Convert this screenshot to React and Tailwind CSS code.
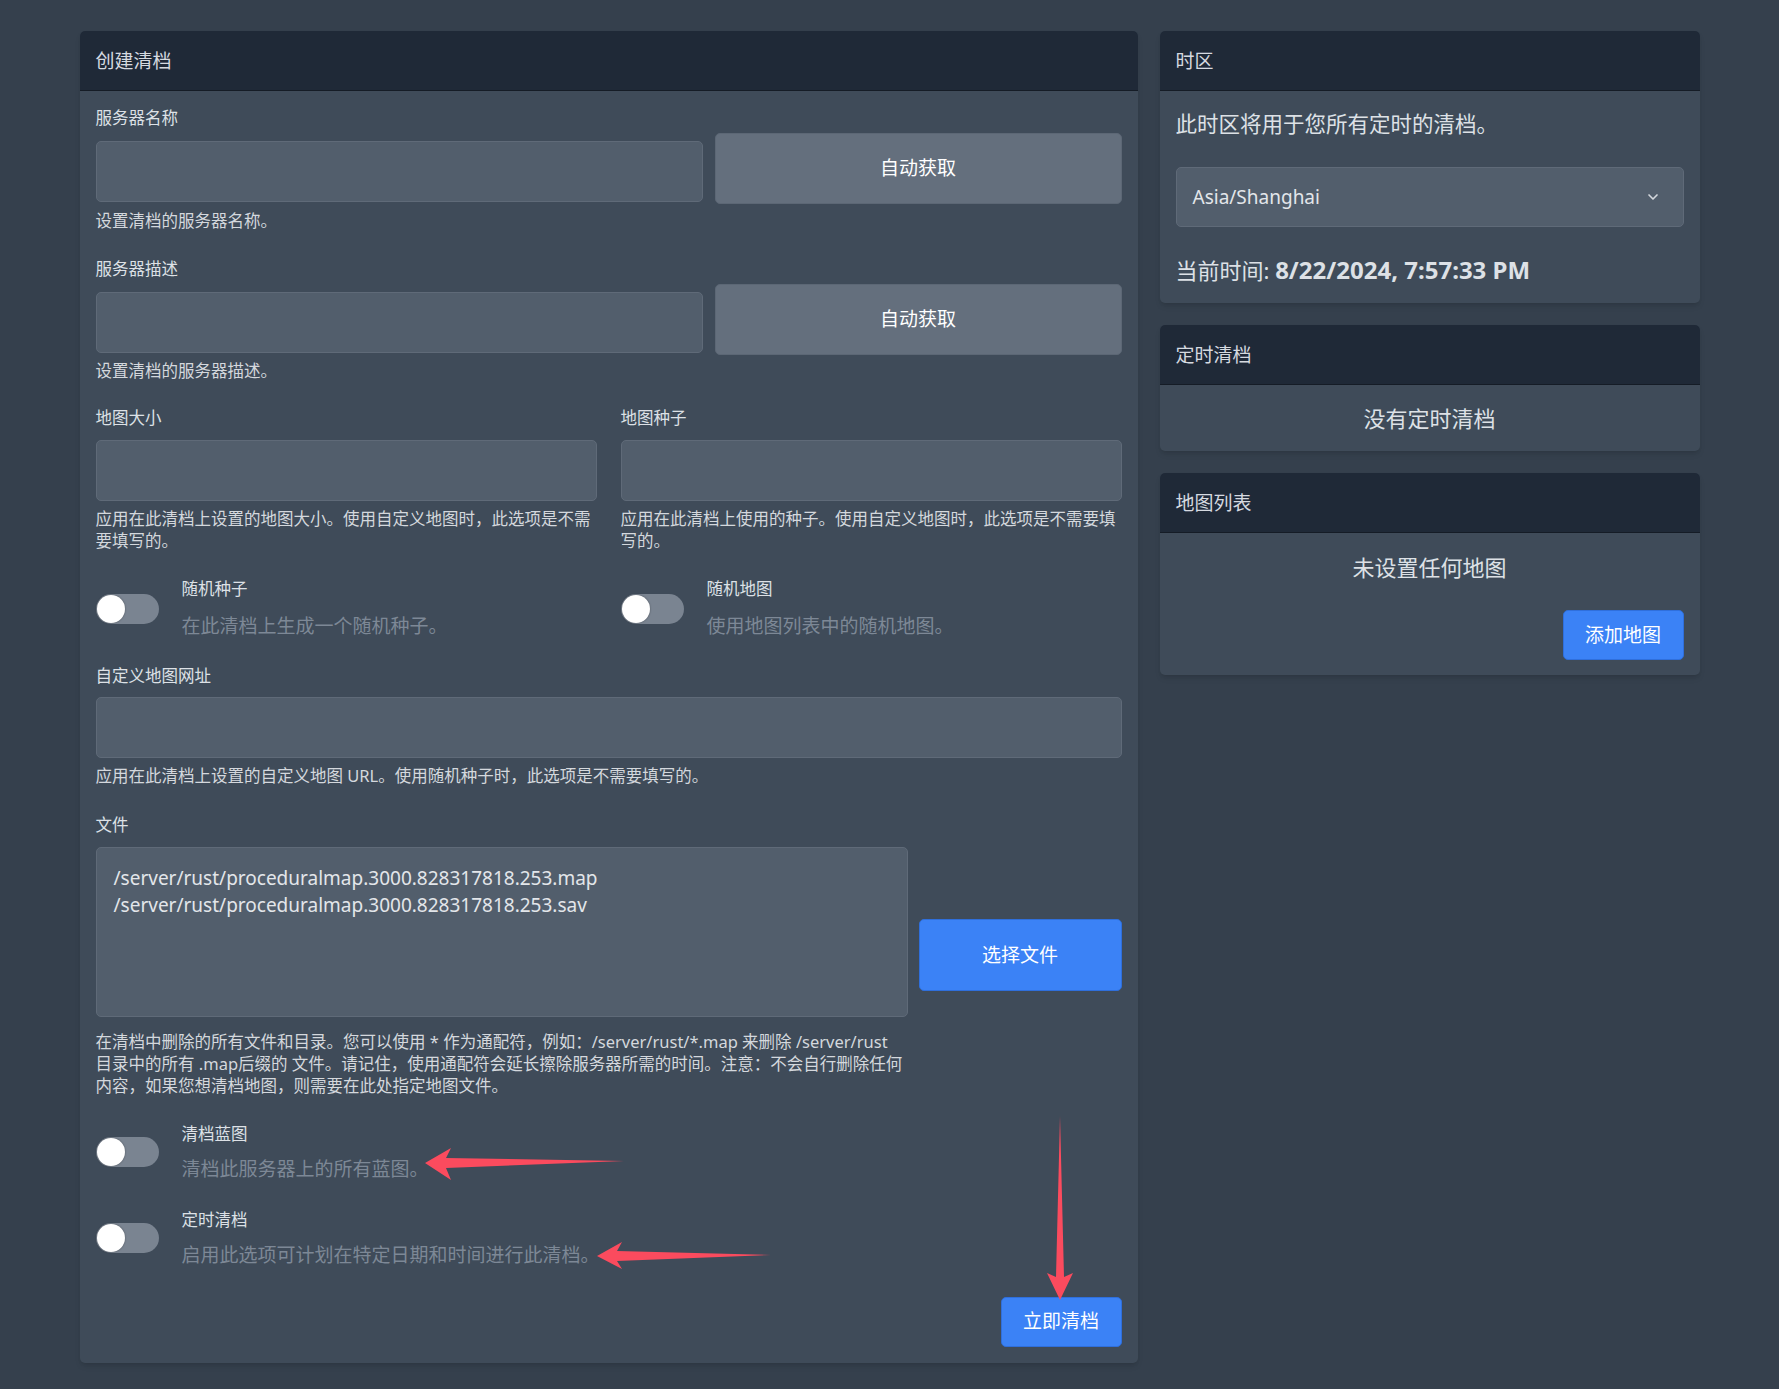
import { ChevronDown } from "lucide-react";

function Label({ children }) {
    return <div className="text-[16.5px] leading-[22px] text-[#dde1e6]">{children}</div>;
}

function Help({ children, className = "" }) {
    return (
        <div className={`text-[16.5px] leading-[21.5px] text-[#d4d8dd] whitespace-nowrap ${className}`}>
            {children}
        </div>
    );
}

function TextInput() {
    return <div className="h-[61px] rounded-[5px] border border-[#5f6a78] bg-[#525e6c]" />;
}

// switch + title + grey description
function Toggle({ label, desc, tight = false }) {
    return (
        <div className="flex gap-[23px]">
            <div
                className={`${tight ? "mt-[14px]" : "mt-[16px]"} h-[30px] w-[63px] shrink-0 rounded-full bg-[#7a8491] p-[1px]`}
            >
                <div className="h-[28px] w-[28px] rounded-full bg-white shadow-[0_0_2px_rgba(0,0,0,0.4)]" />
            </div>
            <div>
                <div className="text-[16.5px] leading-[22px] text-[#dde1e6]">{label}</div>
                <div
                    className={`${tight ? "mt-[11px]" : "mt-[13px]"} text-[19px] leading-[26px] text-[#7d8896]`}
                >
                    {desc}
                </div>
            </div>
        </div>
    );
}

function CardHeader({ children }) {
    return (
        <div className="flex h-[60px] items-center border-b border-[#151c26] bg-[#1f2937] px-4 pt-[2px] text-[19px] text-[#d6dae0]">
            {children}
        </div>
    );
}

export default function App() {
    return (
        <div className="relative min-h-[1389px] bg-[#35404d] font-['Noto_Sans','Noto_Sans_CJK_SC',sans-serif] pt-[31px]">
            <div className="mx-auto flex w-[1620px] items-start gap-[22px]">
                {/* ── Create wipe ── */}
                <div className="w-[1058px] shrink-0 overflow-hidden rounded-[5px] bg-[#3f4b59] shadow-md">
                    <CardHeader>创建清档</CardHeader>
                    <div className="px-4 pt-4 pb-4">
                        {/* server name */}
                        <div className="flex gap-3">
                            <div className="w-[607px]">
                                <Label>服务器名称</Label>
                                <div className="mt-[12px]">
                                    <TextInput />
                                </div>
                            </div>
                            <button className="mt-[26px] h-[71px] flex-1 rounded-[5px] border border-[#5c6775] bg-[#646f7d] text-[19px] text-white">
                                自动获取
                            </button>
                        </div>
                        <Help className="mt-[6px]">设置清档的服务器名称。</Help>

                        {/* server description */}
                        <div className="mt-[26px] flex gap-3">
                            <div className="w-[607px]">
                                <Label>服务器描述</Label>
                                <div className="mt-[12px]">
                                    <TextInput />
                                </div>
                            </div>
                            <button className="mt-[26px] h-[71px] flex-1 rounded-[5px] border border-[#5c6775] bg-[#646f7d] text-[19px] text-white">
                                自动获取
                            </button>
                        </div>
                        <Help className="mt-[5px]">设置清档的服务器描述。</Help>

                        {/* map size / seed */}
                        <div className="mt-[26px] grid grid-cols-2 gap-6">
                            <div>
                                <Label>地图大小</Label>
                                <div className="mt-[11px]">
                                    <TextInput />
                                </div>
                                <Help className="mt-[7px]">
                                    应用在此清档上设置的地图大小。使用自定义地图时，此选项是不需
                                    <br />
                                    要填写的。
                                </Help>
                            </div>
                            <div>
                                <Label>地图种子</Label>
                                <div className="mt-[11px]">
                                    <TextInput />
                                </div>
                                <Help className="mt-[7px]">
                                    应用在此清档上使用的种子。使用自定义地图时，此选项是不需要填
                                    <br />
                                    写的。
                                </Help>
                            </div>
                        </div>

                        <div className="mt-[27px] grid grid-cols-2 gap-6">
                            <Toggle label="随机种子" desc="在此清档上生成一个随机种子。" />
                            <Toggle label="随机地图" desc="使用地图列表中的随机地图。" />
                        </div>

                        {/* custom map url */}
                        <div className="mt-[26px]">
                            <Label>自定义地图网址</Label>
                            <div className="mt-[10px]">
                                <TextInput />
                            </div>
                            <Help className="mt-[7px]">
                                应用在此清档上设置的自定义地图 URL。使用随机种子时，此选项是不需要填写的。
                            </Help>
                        </div>

                        {/* files */}
                        <div className="mt-[27px] flex items-center gap-[11px]">
                            <div className="w-[812px]">
                                <Label>文件</Label>
                                <div className="mt-[11px] h-[170px] rounded-[5px] border border-[#5f6a78] bg-[#525e6c] px-[17px] pt-[17px] text-[19px] leading-[27px] text-[#e3e6ea]">
                                    <div>/server/rust/proceduralmap.3000.828317818.253.map</div>
                                    <div>/server/rust/proceduralmap.3000.828317818.253.sav</div>
                                </div>
                                <Help className="mt-[14px] leading-[22px]">
                                    在清档中删除的所有文件和目录。您可以使用 * 作为通配符，例如：/server/rust/*.map 来删除 /server/rust
                                    <br />
                                    目录中的所有 .map后缀的 文件。请记住，使用通配符会延长擦除服务器所需的时间。注意：不会自行删除任何
                                    <br />
                                    内容，如果您想清档地图，则需要在此处指定地图文件。
                                </Help>
                            </div>
                            <button className="h-[72px] flex-1 rounded-[5px] border border-[#2f6fdc] bg-[#3b82f6] text-[19px] text-white">
                                选择文件
                            </button>
                        </div>

                        <div className="mt-[26px]">
                            <Toggle tight label="清档蓝图" desc="清档此服务器上的所有蓝图。" />
                        </div>
                        <div className="mt-[27px]">
                            <Toggle tight label="定时清档" desc="启用此选项可计划在特定日期和时间进行此清档。" />
                        </div>

                        <div className="mt-[29px] flex justify-end">
                            <button className="h-[50px] w-[121px] rounded-[5px] border border-[#2f6fdc] bg-[#3b82f6] text-[19px] text-white">
                                立即清档
                            </button>
                        </div>
                    </div>
                </div>

                {/* ── Right column ── */}
                <div className="flex flex-1 flex-col gap-[22px]">
                    <div className="overflow-hidden rounded-[5px] bg-[#3f4b59] shadow-md">
                        <CardHeader>时区</CardHeader>
                        <div className="px-4 pt-[17px] pb-[17px]">
                            <div className="text-[21.5px] leading-[32px] text-[#dde1e6]">
                                此时区将用于您所有定时的清档。
                            </div>
                            <div className="mt-[27px] flex h-[60px] items-center justify-between rounded-[5px] border border-[#5f6a78] bg-[#525e6c] pl-[16px] pr-[22px] text-[19px] text-[#e3e6ea]">
                                <span>Asia/Shanghai</span>
                                <ChevronDown className="h-4 w-4 text-[#d4d8dd]" strokeWidth={2.5} />
                            </div>
                            <div className="mt-[27px] text-[22px] leading-[32px] text-[#dde1e6]">
                                当前时间: <span className="text-[24px] font-bold">8/22/2024, 7:57:33 PM</span>
                            </div>
                        </div>
                    </div>

                    <div className="overflow-hidden rounded-[5px] bg-[#3f4b59] shadow-md">
                        <CardHeader>定时清档</CardHeader>
                        <div className="px-4 pt-[17px] pb-[17px] text-center text-[22px] leading-[32px] text-[#dde1e6]">
                            没有定时清档
                        </div>
                    </div>

                    <div className="overflow-hidden rounded-[5px] bg-[#3f4b59] shadow-md">
                        <CardHeader>地图列表</CardHeader>
                        <div className="px-4 pt-[18px] pb-[15px]">
                            <div className="text-center text-[22px] leading-[32px] text-[#dde1e6]">
                                未设置任何地图
                            </div>
                            <div className="mt-[27px] flex justify-end">
                                <button className="h-[50px] w-[121px] rounded-[5px] border border-[#2f6fdc] bg-[#3b82f6] text-[19px] text-white">
                                    添加地图
                                </button>
                            </div>
                        </div>
                    </div>
                </div>
            </div>

            {/* annotation arrows */}
            <svg
                className="pointer-events-none absolute left-0 top-0"
                width="1779"
                height="1389"
                viewBox="0 0 1779 1389"
            >
                <polygon
                    fill="#fb4b5e"
                    points="425,1163 451,1148 446,1158 624,1161 446,1168 451,1180"
                />
                <polygon
                    fill="#fb4b5e"
                    points="597,1256 622,1242 617,1251 771,1255 617,1261 622,1269"
                />
                <polygon
                    fill="#fb4b5e"
                    points="1060,1300 1047,1273 1056,1277 1060,1116 1064,1277 1073,1273"
                />
            </svg>
        </div>
    );
}
